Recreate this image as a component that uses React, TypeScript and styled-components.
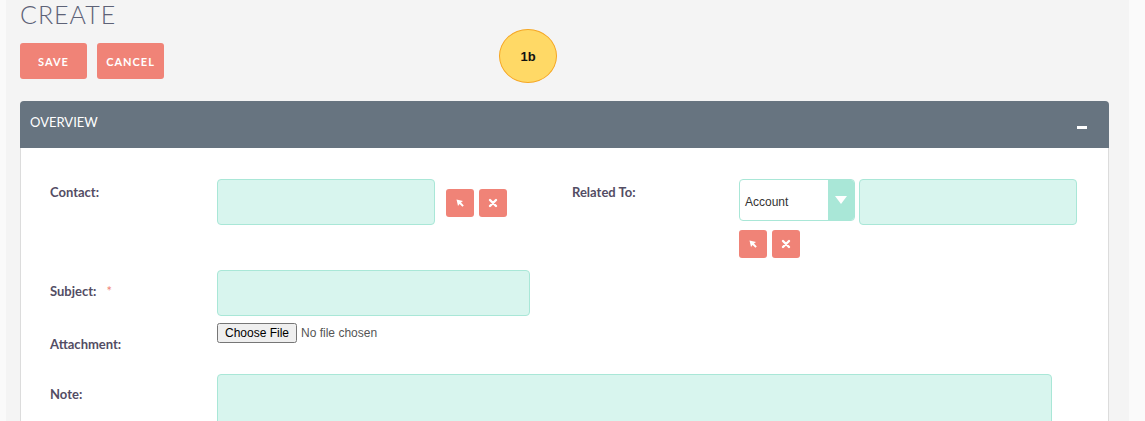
import React from 'react';
import styled, { createGlobalStyle } from 'styled-components';

const GlobalStyle = createGlobalStyle`
  html, body {
    margin: 0;
    padding: 0;
    background: #fafafa;
    font-family: Lato, 'Open Sans', Arial, sans-serif;
  }
`;

const Page = styled.div`
  position: relative;
  margin-left: 6px;
  width: 1123px;
  min-height: 421px;
  padding: 0 0 0 14px;
  box-sizing: border-box;
  background: #f4f4f4;
  overflow: hidden;
`;

const Title = styled.h1`
  margin: 0;
  padding-top: 1px;
  font-family: Lato, sans-serif;
  font-weight: 300;
  font-size: 25px;
  line-height: 26px;
  letter-spacing: 1px;
  color: #5d6277;
`;

const ActionBar = styled.div`
  display: flex;
  gap: 10px;
  margin-top: 16px;
`;

const ActionButton = styled.button`
  min-width: 67px;
  height: 36px;
  padding: 0 9px;
  border: none;
  border-radius: 3px;
  background: #f08377;
  color: #fff;
  font-family: Lato, sans-serif;
  font-size: 11px;
  font-weight: 700;
  letter-spacing: 1px;
  text-transform: uppercase;
  cursor: pointer;
`;

// annotation bubble over the page
const Badge = styled.div`
  position: absolute;
  left: 493px;
  top: 29px;
  width: 56px;
  height: 52px;
  border: 1px solid #f5a623;
  border-radius: 50%;
  background: #ffd966;
  display: flex;
  align-items: center;
  justify-content: center;
  font-family: 'Liberation Sans', Arial, sans-serif;
  font-size: 13px;
  font-weight: 700;
  color: #111;
`;

const Panel = styled.section`
  margin-top: 22px;
  width: 1089px;
  border: 1px solid #dcdcdc;
  border-radius: 4px 4px 0 0;
  background: #fff;
  box-sizing: border-box;
`;

const PanelHeader = styled.div`
  height: 47px;
  margin: -1px -1px 0 -1px;
  padding: 0 22px 5px 10px;
  box-sizing: border-box;
  display: flex;
  align-items: center;
  justify-content: space-between;
  background: #677480;
  border-radius: 4px 4px 0 0;
  color: #fff;
  font-size: 13px;
  text-transform: uppercase;
`;

const Minus = styled.span`
  display: block;
  width: 10px;
  height: 3px;
  margin-top: 11px;
  background: #fff;
`;

const PanelBody = styled.div`
  padding: 31px 0 40px 29px;
`;

const Row = styled.div<{ $gap?: number }>`
  display: grid;
  grid-template-columns: 167px 355px 167px 1fr;
  margin-top: ${(p) => p.$gap ?? 0}px;
`;

const Label = styled.div<{ $top: number }>`
  padding-top: ${(p) => p.$top}px;
  font-size: 13px;
  line-height: 16px;
  font-weight: 700;
  color: #534d64;
`;

const Required = styled.span`
  margin-left: 10px;
  color: #f08377;
  font-weight: 400;
`;

const Field = styled.div<{ $span?: number; $align?: string }>`
  grid-column: span ${(p) => p.$span ?? 1};
  display: flex;
  align-items: ${(p) => p.$align ?? 'center'};
`;

const FieldStack = styled.div`
  display: flex;
  flex-direction: column;
  gap: 5px;
`;

const TextInput = styled.input<{ $width: number }>`
  width: ${(p) => p.$width}px;
  height: 46px;
  box-sizing: border-box;
  border: 1px solid #a9e7d7;
  border-radius: 4px;
  background: #d8f5ee;
  outline: none;
`;

const TextArea = styled.textarea`
  width: 835px;
  height: 90px;
  box-sizing: border-box;
  border: 1px solid #a9e7d7;
  border-radius: 4px;
  background: #d8f5ee;
  resize: none;
  outline: none;
`;

const SmallButtons = styled.div<{ $left?: number; $top?: number }>`
  display: flex;
  gap: 5px;
  margin-left: ${(p) => p.$left ?? 0}px;
  margin-top: ${(p) => p.$top ?? 0}px;
`;

const SmallButton = styled.button`
  width: 28px;
  height: 28px;
  padding: 0;
  border: none;
  border-radius: 3px;
  background: #f08377;
  display: flex;
  align-items: center;
  justify-content: center;
  cursor: pointer;
`;

const SelectBox = styled.div`
  width: 116px;
  height: 42px;
  box-sizing: border-box;
  border: 1px solid #a9e7d7;
  border-radius: 4px;
  background: #fff;
  display: flex;
  overflow: hidden;
  align-self: flex-start;
`;

const SelectValue = styled.span`
  flex: 1;
  padding: 3px 0 0 5px;
  display: flex;
  align-items: center;
  font-family: 'Liberation Sans', Arial, sans-serif;
  font-size: 12px;
  color: #333;
`;

const SelectArrow = styled.span`
  width: 26px;
  background: #a9e7d7;
  display: flex;
  align-items: center;
  justify-content: center;
`;

const InlineGroup = styled.div`
  display: flex;
  gap: 4px;
  align-items: flex-start;
`;

const FileInput = styled.input`
  font-family: 'Liberation Sans', Arial, sans-serif;
  font-size: 12px;
  color: #555;
`;

const SelectIcon = () => (
  <svg width="10" height="10" viewBox="0 0 10 10">
    <path d="M1.5 1.5 L8 3 L6 4.6 L8.8 7.4 L7.4 8.8 L4.6 6 L3 8 Z" fill="#fff" />
  </svg>
);

const ClearIcon = () => (
  <svg width="10" height="10" viewBox="0 0 10 10">
    <path d="M2 2 L8 8 M8 2 L2 8" stroke="#fff" strokeWidth="2.4" strokeLinecap="round" />
  </svg>
);

const LookupButtons: React.FC<{ left?: number; top?: number }> = ({ left, top }) => (
  <SmallButtons $left={left} $top={top}>
    <SmallButton type="button">
      <SelectIcon />
    </SmallButton>
    <SmallButton type="button">
      <ClearIcon />
    </SmallButton>
  </SmallButtons>
);

export default function App() {
  return (
    <>
      <GlobalStyle />
      <Page>
        <Title>CREATE</Title>
        <ActionBar>
          <ActionButton type="button">Save</ActionButton>
          <ActionButton type="button">Cancel</ActionButton>
        </ActionBar>
        <Badge>1b</Badge>

        <Panel>
          <PanelHeader>
            <span>Overview</span>
            <Minus />
          </PanelHeader>
          <PanelBody>
            <Row>
              <Label $top={5}>Contact:</Label>
              <Field $align="flex-start">
                <TextInput $width={218} />
                <LookupButtons left={11} top={10} />
              </Field>
              <Label $top={5}>Related To:</Label>
              <FieldStack>
                <InlineGroup>
                  <SelectBox>
                    <SelectValue>Account</SelectValue>
                    <SelectArrow>
                      <svg width="12" height="8" viewBox="0 0 12 8">
                        <path d="M0 0 H12 L6 8 Z" fill="#fff" />
                      </svg>
                    </SelectArrow>
                  </SelectBox>
                  <TextInput $width={218} />
                </InlineGroup>
                <LookupButtons />
              </FieldStack>
            </Row>

            <Row $gap={12}>
              <Label $top={13}>
                Subject:<Required>*</Required>
              </Label>
              <Field $span={3}>
                <TextInput $width={313} />
              </Field>
            </Row>

            <Row $gap={7}>
              <Label $top={13}>Attachment:</Label>
              <Field $span={3} $align="flex-start">
                <FileInput type="file" />
              </Field>
            </Row>

            <Row $gap={22}>
              <Label $top={12}>Note:</Label>
              <Field $span={3}>
                <TextArea />
              </Field>
            </Row>
          </PanelBody>
        </Panel>
      </Page>
    </>
  );
}
